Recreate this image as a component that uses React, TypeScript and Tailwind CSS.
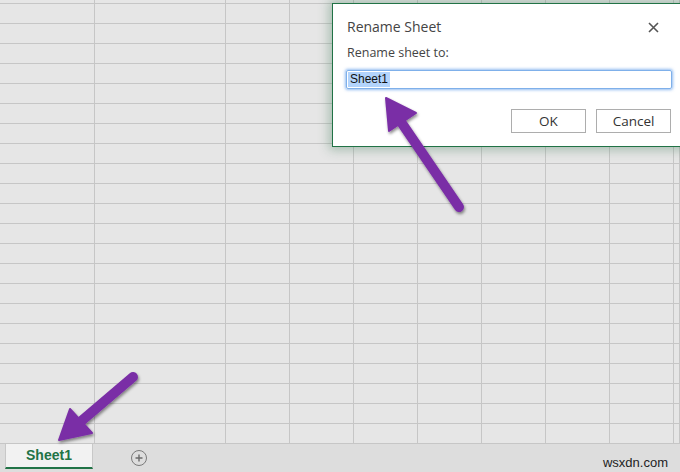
import React from "react";

const colWidths = [95, 131, 64, 64, 64, 64, 64, 64, 64, 6];
const rows = Array.from({ length: 22 });

function Grid() {
  return (
    <div className="flex flex-col">
      <div className="flex h-[3px]">
        {colWidths.map((w, i) => (
          <div key={i} className="h-full shrink-0 border-r border-[#c6c6c6]" style={{ width: w }} />
        ))}
      </div>
      {rows.map((_, r) => (
        <div key={r} className="flex h-[20px] border-t border-[#c6c6c6]">
          {colWidths.map((w, i) => (
            <div key={i} className="h-full shrink-0 border-r border-[#c6c6c6]" style={{ width: w }} />
          ))}
        </div>
      ))}
    </div>
  );
}

export default function App() {
  return (
    <div
      className="relative h-[472px] w-[680px] overflow-hidden bg-[#e6e6e6]"
      style={{ fontFamily: '"Open Sans", "Liberation Sans", sans-serif' }}
    >
      <Grid />
      {/* Tab bar */}
      <div className="flex h-[29px] items-start border-t border-[#c6c6c6] bg-[#dddddd]">
        <div className="ml-[5px] flex h-[25px] w-[88px] items-center justify-center border-x border-[#c8c8c8] border-b-2 border-b-[#217346] bg-[#f2f2f2]">
          <span className="text-[14px] font-bold text-[#217346]" style={{ fontFamily: '"Liberation Sans", sans-serif' }}>Sheet1</span>
        </div>
        <div className="ml-[38px] mt-[6px] flex h-[16px] w-[16px] items-center justify-center rounded-full border border-[#7a7a7a]">
          <svg width="10" height="10" viewBox="0 0 10 10">
            <path d="M5 1.5v7M1.5 5h7" stroke="#6a6a6a" strokeWidth="1.4" />
          </svg>
        </div>
        <div className="ml-auto mr-[12px] mt-[9px] text-[13px] text-[#222]" style={{ fontFamily: '"Liberation Sans", sans-serif' }}>
          wsxdn.com
        </div>
      </div>

      {/* Dialog */}
      <div className="absolute left-[332px] top-[3px] h-[144px] w-[370px] border border-[#217346] bg-white shadow-[0_0_10px_3px_rgba(90,140,110,0.45)]">
        <div className="flex items-start justify-between pl-[14px] pr-[42px] pt-[13px]">
          <div className="text-[14px] leading-[20px] text-[#444]">Rename Sheet</div>
          <svg width="11" height="11" viewBox="0 0 11 11" className="mt-[5px]">
            <path d="M1 1l9 9M10 1l-9 9" stroke="#555" strokeWidth="1.6" />
          </svg>
        </div>
        <div className="pl-[14px] pt-[8px] text-[12.5px] leading-[16px] text-[#444]">Rename sheet to:</div>
        <div className="ml-[13px] mt-[9px] flex h-[19px] w-[326px] items-center rounded-[2px] border border-[#7fb0ea] px-[1px] shadow-[0_0_3px_1px_rgba(100,160,235,0.7)]">
          <span className="bg-[#b3d4fc] px-[2px] text-[12px] leading-[15px] text-[#111]" style={{ fontFamily: '"Liberation Sans", sans-serif' }}>Sheet1</span>
        </div>
        <div className="ml-[178px] mt-[20px] flex gap-[10px]">
          <div className="flex h-[24px] w-[75px] items-center justify-center border border-[#adadad] bg-white text-[13.5px] text-[#333]">OK</div>
          <div className="flex h-[24px] w-[75px] items-center justify-center border border-[#adadad] bg-white text-[13.5px] text-[#333]">Cancel</div>
        </div>
      </div>

      {/* Arrows */}
      <svg className="pointer-events-none absolute left-0 top-0" width="680" height="472" viewBox="0 0 680 472">
        <defs>
          <filter id="sh" x="-20%" y="-20%" width="140%" height="140%">
            <feDropShadow dx="1" dy="2" stdDeviation="1.5" floodColor="#000" floodOpacity="0.45" />
          </filter>
        </defs>
        <g filter="url(#sh)" fill="#7a2fa6" stroke="#7a2fa6">
          <line x1="459" y1="207" x2="399" y2="119" strokeWidth="10" strokeLinecap="round" />
          <polygon points="386,98 389,131 416,113" strokeWidth="2" strokeLinejoin="round" />
          <line x1="133" y1="377" x2="79" y2="423" strokeWidth="10" strokeLinecap="round" />
          <polygon points="59,440 70,409 92,433" strokeWidth="2" strokeLinejoin="round" />
        </g>
      </svg>
    </div>
  );
}
